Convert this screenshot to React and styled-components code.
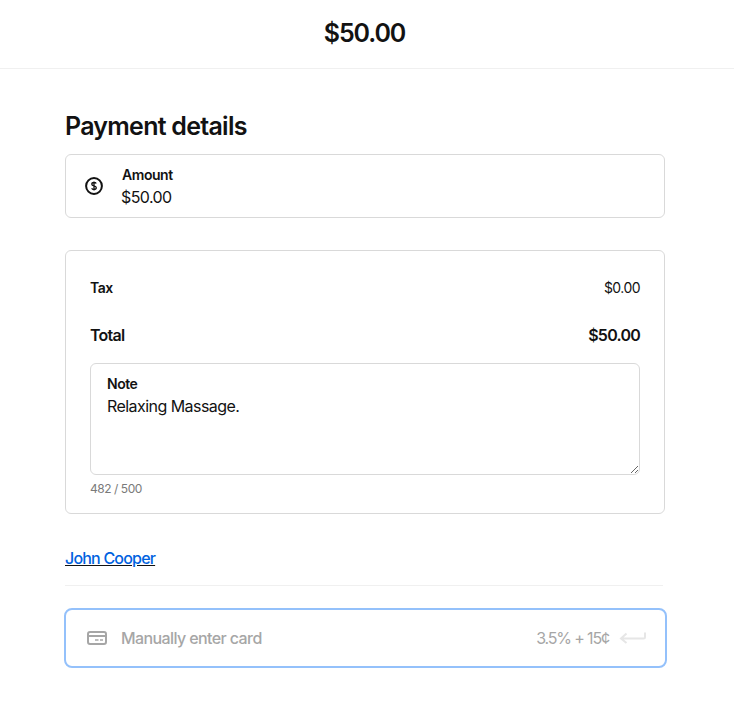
import styled, { createGlobalStyle } from "styled-components";

const GlobalStyle = createGlobalStyle`
  html, body {
    margin: 0;
    padding: 0;
    background: #fff;
    color: #121212;
    font-family: Inter, "Noto Sans", "Liberation Sans", sans-serif;
  }
  * {
    box-sizing: border-box;
  }
`;

const Header = styled.header`
  height: 69px;
  padding: 0 5px 2px 0;
  display: flex;
  align-items: center;
  justify-content: center;
  border-bottom: 1px solid #f0f0f0;
  font-size: 25px;
  font-weight: 600;
  letter-spacing: -1.1px;
`;

const Main = styled.main`
  width: 600px;
  margin-left: 65px;
  padding-top: 42px;
`;

const Title = styled.h1`
  margin: 0 0 13px;
  font-size: 25px;
  line-height: 30px;
  font-weight: 600;
  letter-spacing: -0.74px;
`;

const Card = styled.section`
  border: 1px solid #d9d9d9;
  border-radius: 6px;
`;

const AmountCard = styled(Card)`
  height: 64px;
  padding: 0 19px;
  display: flex;
  align-items: center;
  gap: 19px;
`;

const FieldLabel = styled.div`
  font-size: 14px;
  line-height: 17px;
  font-weight: 600;
  letter-spacing: -0.45px;
`;

const FieldValue = styled.div`
  margin-top: 4px;
  margin-left: -1px;
  font-size: 16px;
  line-height: 20px;
  letter-spacing: -0.6px;
`;

const SummaryCard = styled(Card)`
  height: 264px;
  margin-top: 32px;
  padding: 23px 24px 0;
`;

const TaxRow = styled.div`
  height: 26px;
  display: flex;
  align-items: center;
  justify-content: space-between;
  font-size: 14px;
  font-weight: 600;
  letter-spacing: -0.55px;
`;

const TotalRow = styled(TaxRow)`
  height: 46px;
  margin-top: 12px;
  font-size: 16px;
  letter-spacing: -0.75px;
`;

const TaxValue = styled.span`
  font-weight: 400;
`;

const NoteBox = styled.div`
  position: relative;
  height: 112px;
  margin-top: 5px;
`;

const NoteLabel = styled.label`
  position: absolute;
  top: 12px;
  left: 17px;
  font-size: 14px;
  line-height: 17px;
  font-weight: 600;
  letter-spacing: -0.45px;
`;

const NoteInput = styled.textarea`
  display: block;
  width: 100%;
  height: 112px;
  padding: 32px 16px 8px;
  border: 1px solid #d9d9d9;
  border-radius: 6px;
  outline: none;
  resize: vertical;
  color: #121212;
  font-family: inherit;
  font-size: 16px;
  line-height: 20px;
  letter-spacing: -0.55px;
`;

const Counter = styled.div`
  margin-top: 6px;
  font-size: 12px;
  line-height: 16px;
  letter-spacing: -0.45px;
  color: #7a7a7a;
`;

const Customer = styled.div`
  height: 72px;
  width: 598px;
  padding-top: 34px;
  border-bottom: 1px solid #f0f0f0;
`;

const CustomerLink = styled.a`
  font-size: 16px;
  line-height: 20px;
  font-weight: 500;
  letter-spacing: -0.8px;
  color: #0062e0;
  text-decoration: underline;
  text-decoration-color: #121212;
`;

const CardButton = styled.button`
  width: 603px;
  height: 60px;
  margin: 22px 0 0 -1px;
  padding: 0 19px 0 21px;
  display: flex;
  align-items: center;
  background: #fff;
  border: 2px solid #94c1fb;
  border-radius: 8px;
  font-family: inherit;
`;

const CardLabel = styled.span`
  margin-left: 14px;
  font-size: 16px;
  font-weight: 500;
  letter-spacing: -0.6px;
  color: #a6a6a6;
`;

const Fee = styled.span`
  margin-left: auto;
  margin-right: 10px;
  font-size: 16px;
  letter-spacing: -1.15px;
  color: #a6a6a6;
`;

const DollarIcon = () => (
  <svg width="18" height="18" viewBox="0 0 18 18" fill="none">
    <circle cx="9" cy="9" r="7.9" stroke="#121212" strokeWidth="2" />
    <path
      d="M11.2 6.6C10.9 5.9 10.1 5.5 9 5.5c-1.3 0-2.2.6-2.2 1.7 0 2.3 4.5 1.2 4.5 3.6 0 1.1-1 1.7-2.3 1.7-1.2 0-2-.5-2.3-1.3M9 4.4v9.2"
      stroke="#121212"
      strokeWidth="1.3"
    />
  </svg>
);

const CreditCardIcon = () => (
  <svg width="20" height="14" viewBox="0 0 20 14" fill="none">
    <rect x="1" y="1" width="18" height="12" rx="2" stroke="#a6a6a6" strokeWidth="2" />
    <path d="M1 5h18" stroke="#a6a6a6" strokeWidth="2" />
    <path d="M8 9h3.5M13 9h3" stroke="#a6a6a6" strokeWidth="1.6" />
  </svg>
);

const ReturnIcon = () => (
  <svg width="27" height="14" viewBox="0 0 27 14" fill="none">
    <path d="M26 1.5v4.5c0 1-.5 1.5-1.5 1.5H2M7.5 2.5 2 7.5l5.5 4.5" stroke="#e6e6e6" strokeWidth="2" />
  </svg>
);

const App = () => {
  return (
    <>
      <GlobalStyle />
      <Header>$50.00</Header>
      <Main>
        <Title>Payment details</Title>
        <AmountCard>
          <DollarIcon />
          <div>
            <FieldLabel>Amount</FieldLabel>
            <FieldValue>$50.00</FieldValue>
          </div>
        </AmountCard>
        <SummaryCard>
          <TaxRow>
            <span>Tax</span>
            <TaxValue>$0.00</TaxValue>
          </TaxRow>
          <TotalRow>
            <span>Total</span>
            <span>$50.00</span>
          </TotalRow>
          <NoteBox>
            <NoteLabel htmlFor="note">Note</NoteLabel>
            <NoteInput id="note" defaultValue="Relaxing Massage." />
          </NoteBox>
          <Counter>482 / 500</Counter>
        </SummaryCard>
        <Customer>
          <CustomerLink href="#">John Cooper</CustomerLink>
        </Customer>
        <CardButton type="button">
          <CreditCardIcon />
          <CardLabel>Manually enter card</CardLabel>
          <Fee>3.5% + 15¢</Fee>
          <ReturnIcon />
        </CardButton>
      </Main>
    </>
  );
};

export default App;
